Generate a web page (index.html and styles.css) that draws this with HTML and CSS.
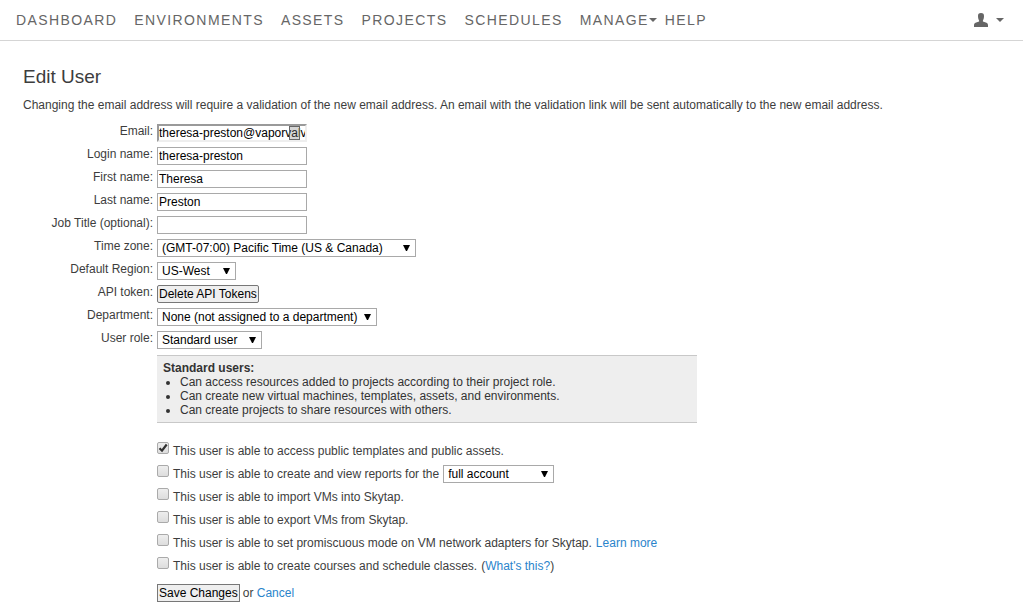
FILE: index.html
```html
<!DOCTYPE html>
<html lang="en">
<head>
<meta charset="utf-8">
<title>Edit User</title>
<link rel="stylesheet" href="styles.css">
</head>
<body>
<header class="topbar">
  <nav class="nav">
    <a href="#">DASHBOARD</a>
    <a href="#">ENVIRONMENTS</a>
    <a href="#">ASSETS</a>
    <a href="#">PROJECTS</a>
    <a href="#">SCHEDULES</a>
    <a href="#" class="has-menu">MANAGE<span class="caret"></span></a>
    <a href="#">HELP</a>
  </nav>
  <button type="button" class="account" aria-label="Account">
    <svg class="person" width="14" height="14" viewBox="0 0 14 14" aria-hidden="true"><path d="M7 0C9.200 0 10.100 1.200 10 3.200L9.900 4.500C9.700 6 9.300 6.900 8.900 7.400V8.600L12.500 9.800C13.600 10.300 14 11 14 12.500V14H0V12.500C0 11 .4 10.300 1.500 9.800L5.100 8.600V7.400C4.700 6.900 4.300 6 4.100 4.500L4 3.200C3.900 1.200 4.800 0 7 0Z"/></svg>
    <span class="caret"></span>
  </button>
</header>
<main class="page">
  <h1>Edit User</h1>
  <p class="intro">Changing the email address will require a validation of the new email address. An email with the validation link will be sent automatically to the new email address.</p>
  <form class="form">
    <div class="row">
      <label for="email">Email:</label>
      <span class="email-wrap">
        <input class="text email" id="email" type="text" value="theresa-preston@vaporvalve.com">
        <span class="badge"></span>
      </span>
    </div>
    <div class="row"><label for="login">Login name:</label><input class="text" id="login" type="text" value="theresa-preston"></div>
    <div class="row"><label for="first">First name:</label><input class="text" id="first" type="text" value="Theresa"></div>
    <div class="row"><label for="last">Last name:</label><input class="text" id="last" type="text" value="Preston"></div>
    <div class="row"><label for="job">Job Title (optional):</label><input class="text" id="job" type="text"></div>
    <div class="row"><label for="tz">Time zone:</label><select class="select tz" id="tz"><option>(GMT-07:00) Pacific Time (US &amp; Canada)</option></select></div>
    <div class="row"><label for="region">Default Region:</label><select class="select region" id="region"><option>US-West</option></select></div>
    <div class="row"><label for="token">API token:</label><button class="btn rounded" id="token" type="button">Delete API Tokens</button></div>
    <div class="row"><label for="dept">Department:</label><select class="select dept" id="dept"><option>None (not assigned to a department)</option></select></div>
    <div class="row"><label for="role">User role:</label><select class="select role" id="role"><option>Standard user</option></select></div>

    <div class="fields">
      <section class="info">
        <strong>Standard users:</strong>
        <ul>
          <li>Can access resources added to projects according to their project role.</li>
          <li>Can create new virtual machines, templates, assets, and environments.</li>
          <li>Can create projects to share resources with others.</li>
        </ul>
      </section>
      <div class="checks">
        <div class="check"><input type="checkbox" id="c1" checked><label for="c1">This user is able to access public templates and public assets.</label></div>
        <div class="check"><input type="checkbox" id="c2"><label for="c2">This user is able to create and view reports for the</label><select class="select scope" aria-label="Report scope"><option>full account</option></select></div>
        <div class="check"><input type="checkbox" id="c3"><label for="c3">This user is able to import VMs into Skytap.</label></div>
        <div class="check"><input type="checkbox" id="c4"><label for="c4">This user is able to export VMs from Skytap.</label></div>
        <div class="check"><input type="checkbox" id="c5"><label for="c5">This user is able to set promiscuous mode on VM network adapters for Skytap.</label><a href="#">Learn more</a></div>
        <div class="check"><input type="checkbox" id="c6"><label for="c6">This user is able to create courses and schedule classes.</label><span>(<a href="#">What's this?</a>)</span></div>
      </div>
      <div class="actions"><button class="btn" type="submit">Save Changes</button><span>or <a href="#">Cancel</a></span></div>
    </div>
  </form>
</main>
</body>
</html>
```
FILE: styles.css
```css
* { box-sizing: border-box; }

body {
  margin: 0;
  background: #fff;
  color: #3d3d3d;
  font: 12px/14px "Liberation Sans", Arial, sans-serif;
}

a { color: #2a84cb; text-decoration: none; }

input, select, button { font: inherit; margin: 0; }

.topbar {
  display: flex;
  align-items: center;
  justify-content: space-between;
  height: 41px;
  padding: 0 19px 0 16px;
  border-bottom: 1px solid #d5d5d5;
}

.nav {
  display: flex;
  gap: 17px;
  font-size: 14px;
  line-height: 16px;
  letter-spacing: 0.1em;
}

.nav a { color: #666; }

.nav .has-menu {
  display: flex;
  align-items: center;
  margin-right: -9px;
}

.caret {
  width: 0;
  border: 4px solid transparent;
  border-top-color: #666;
  border-bottom: 0;
}

.account {
  display: flex;
  align-items: center;
  gap: 8px;
  padding: 0;
  border: 0;
  background: none;
}

.person { fill: #666; }

.page { padding: 25px 23px 8px; }

h1 {
  margin: 0 0 10px;
  font-size: 19px;
  line-height: 22px;
  font-weight: normal;
}

.intro { margin: 0 0 12px; }

.row {
  display: flex;
  gap: 4px;
  height: 18px;
  margin-bottom: 5px;
}

.row > label {
  flex: 0 0 130px;
  text-align: right;
}

.text {
  width: 150px;
  height: 18px;
  padding: 0 1px;
  border: 1px solid #a9a9a9;
  background: #fff;
  color: #000;
}

.email-wrap { position: relative; display: flex; }

.text.email { border: 2px inset #eee; padding: 0; }

.badge {
  position: absolute;
  top: 2px;
  right: 7px;
  width: 11px;
  height: 14px;
  border: 1px solid #666;
  background: rgba(120, 120, 120, 0.3);
}

.select {
  appearance: none;
  height: 18px;
  padding: 0 16px 0 4px;
  border: 1px solid #a9a9a9;
  border-radius: 0;
  background: #fff url("data:image/svg+xml,%3Csvg xmlns='http://www.w3.org/2000/svg' width='7' height='6'%3E%3Cpath d='M0 0h7L4 6H3z'/%3E%3C/svg%3E") no-repeat right 5px center;
  color: #000;
}

.tz { width: 259px; }
.region { width: 79px; }
.dept { width: 220px; }
.role { width: 105px; }
.scope { width: 111px; }

.btn {
  height: 18px;
  padding: 0 1px;
  border: 1px solid #777;
  background: #efefef;
  color: #000;
}

.btn.rounded { border-radius: 2px; }

.fields { margin-left: 134px; }

.info {
  max-width: 540px;
  margin-top: 6px;
  padding: 5px 6px;
  border: solid #c8c8c8;
  border-width: 1px 0;
  background: #eee;
  color: #333;
}

.info ul { margin: 0; padding-left: 17px; }

.checks { margin-top: 19px; }

.check {
  display: flex;
  align-items: center;
  gap: 4px;
  height: 18px;
  margin-bottom: 5px;
}

.check input {
  appearance: none;
  align-self: flex-start;
  width: 12px;
  height: 12px;
  border: 1px solid #aaa;
  border-radius: 2px;
  background: linear-gradient(#eee, #ddd);
}

.check input:checked {
  background: url("data:image/svg+xml,%3Csvg xmlns='http://www.w3.org/2000/svg' width='10' height='10'%3E%3Cpath d='M1.500 5.200L4 7.700L8.700 1.500' fill='none' stroke='%23333' stroke-width='2.200'/%3E%3C/svg%3E") center no-repeat, linear-gradient(#eee, #ddd);
}

.actions {
  display: flex;
  align-items: center;
  gap: 3px;
  margin-top: 9px;
}
```
